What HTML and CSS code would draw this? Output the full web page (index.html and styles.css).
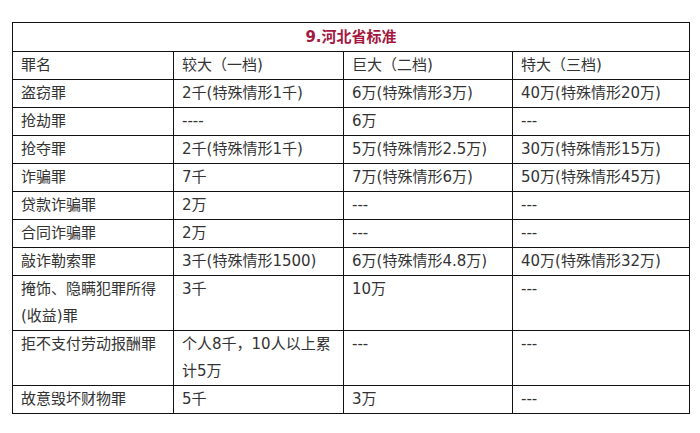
FILE: index.html
```html
<!DOCTYPE html>
<html lang="zh">
<head>
<meta charset="utf-8">
<link rel="stylesheet" href="styles.css">
</head>
<body>
<table class="tbl">
  <colgroup>
    <col class="c1"><col class="c2"><col class="c3"><col class="c4">
  </colgroup>
  <tr><td class="title" colspan="4">9.河北省标准</td></tr>
  <tr><td>罪名</td><td>较大（一档)</td><td>巨大（二档)</td><td>特大（三档)</td></tr>
  <tr><td>盗窃罪</td><td>2千(特殊情形1千)</td><td>6万(特殊情形3万)</td><td>40万(特殊情形20万)</td></tr>
  <tr><td>抢劫罪</td><td>----</td><td>6万</td><td>---</td></tr>
  <tr><td>抢夺罪</td><td>2千(特殊情形1千)</td><td>5万(特殊情形2.5万)</td><td>30万(特殊情形15万)</td></tr>
  <tr><td>诈骗罪</td><td>7千</td><td>7万(特殊情形6万)</td><td>50万(特殊情形45万)</td></tr>
  <tr><td>贷款诈骗罪</td><td>2万</td><td>---</td><td>---</td></tr>
  <tr><td>合同诈骗罪</td><td>2万</td><td>---</td><td>---</td></tr>
  <tr><td>敲诈勒索罪</td><td>3千(特殊情形1500)</td><td>6万(特殊情形4.8万)</td><td>40万(特殊情形32万)</td></tr>
  <tr><td>掩饰、隐瞒犯罪所得(收益)罪</td><td>3千</td><td>10万</td><td>---</td></tr>
  <tr><td>拒不支付劳动报酬罪</td><td>个人8千，10人以上累计5万</td><td>---</td><td>---</td></tr>
  <tr><td>故意毁坏财物罪</td><td>5千</td><td>3万</td><td>---</td></tr>
</table>
</body>
</html>
```
FILE: styles.css
```css
html, body {
  margin: 0;
  padding: 0;
  background: #fff;
}
body {
  padding: 22px 0 0 12px;
  font-family: "DejaVu Sans", "Noto Sans CJK SC", sans-serif;
  font-size: 15px;
  color: #333;
  text-spacing-trim: space-all;
}
.tbl {
  border-collapse: collapse;
  table-layout: fixed;
  width: 677px;
}
.c1 { width: 161px; }
.c2 { width: 170px; }
.c3 { width: 169px; }
.c4 { width: 177px; }
.tbl td {
  border: 1px solid #111;
  padding: 0 8px;
  line-height: 27px;
  vertical-align: top;
  word-break: break-all;
}
.tbl td.title {
  text-align: center;
  font-weight: bold;
  color: #a3183f;
  line-height: 28px;
}
```
